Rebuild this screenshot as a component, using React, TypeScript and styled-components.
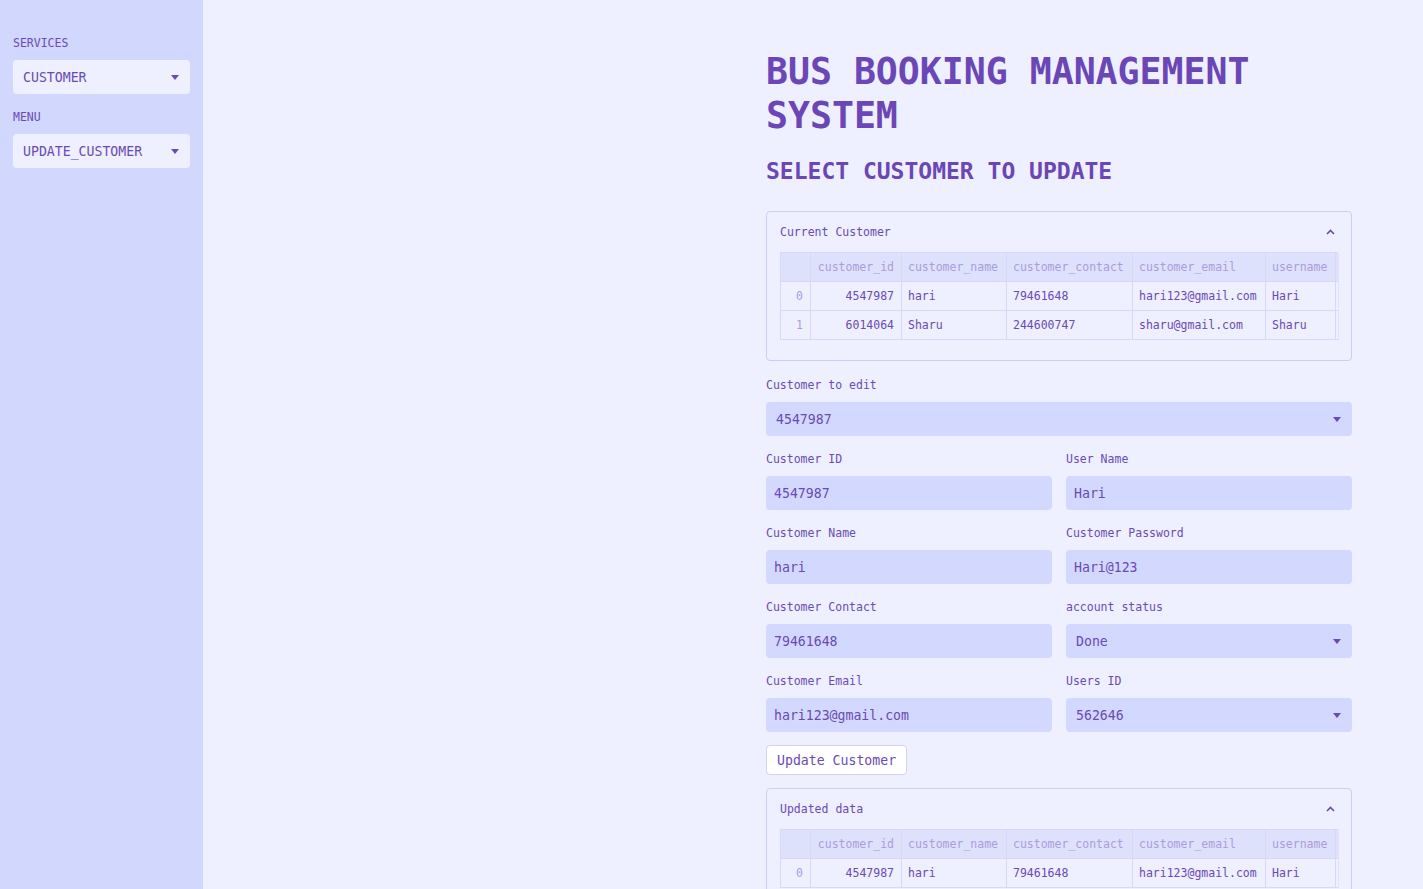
import { Fragment } from 'react';
import styled, { createGlobalStyle } from 'styled-components';

const GlobalStyle = createGlobalStyle`
    html, body {
        margin: 0;
        padding: 0;
        background: #EEF0FF;
        font-family: "DejaVu Sans Mono", "Liberation Mono", monospace;
        color: #6A4AB4;
    }
`;

const Page = styled.div`
    display: flex;
    width: 100%;
    height: 889px;
    overflow: hidden;
`;

const Sidebar = styled.aside`
    width: 203px;
    flex-shrink: 0;
    background: #D2D7FE;
    padding: 36px 13px 0 13px;
    box-sizing: border-box;
`;

const SideLabel = styled.div`
    font-size: 11.5px;
    height: 14px;
    line-height: 14px;
    margin-bottom: 10px;
    color: #6B4BB5;
`;

const SideSelect = styled.div`
    display: flex;
    align-items: center;
    justify-content: space-between;
    height: 34px;
    padding: 0 11px 0 10px;
    background: #EEF0FF;
    border-radius: 4px;
    font-size: 13.2px;
    color: #6A4AB4;
    margin-bottom: 16px;
`;

const Main = styled.main`
    flex: 1;
    display: flex;
    justify-content: flex-end;
    padding: 0 71px 0 0;
`;

const Content = styled.div`
    width: 586px;
    padding-top: 50px;
`;

const Title = styled.h1`
    margin: 0;
    font-size: 36.5px;
    line-height: 44px;
    font-weight: 700;
    color: #6B46B6;
`;

const SubTitle = styled.h2`
    margin: 18px 0 0 0;
    font-size: 23px;
    line-height: 30px;
    font-weight: 600;
    color: #6B46B6;
`;

const Expander = styled.section<{ $top: number }>`
    margin-top: ${p => p.$top}px;
    border: 1px solid #CFCDF3;
    border-radius: 4px;
    padding: 0 13px 20px 13px;
`;

const ExpanderHead = styled.div`
    display: flex;
    align-items: center;
    justify-content: space-between;
    height: 40px;
    font-size: 11.5px;
    color: #6A4AB4;
    padding-right: 3px;
`;

const Table = styled.div`
    display: grid;
    grid-template-columns: 30px 91px 105px 126px 133px 70px 3px;
    border-top: 1px solid #D6D8F6;
    border-left: 1px solid #D6D8F6;
    font-size: 11.5px;
`;

const Cell = styled.div<{ $head?: boolean; $right?: boolean; $index?: boolean }>`
    height: 29px;
    display: flex;
    align-items: center;
    justify-content: ${p => (p.$right ? 'flex-end' : 'flex-start')};
    padding: 0 7px 0 6px;
    box-sizing: border-box;
    background: ${p => (p.$head ? '#DDE1FC' : 'transparent')};
    color: ${p => (p.$head || p.$index ? '#A99DDB' : '#6A4AB4')};
    border-right: 1px solid #D6D8F6;
    border-bottom: 1px solid #D6D8F6;
    white-space: nowrap;
    overflow: hidden;
`;

const Edge = styled.div<{ $head?: boolean }>`
    height: 29px;
    box-sizing: border-box;
    background: ${p => (p.$head ? '#DDE1FC' : 'transparent')};
    border-right: 1px solid #E2E3F8;
    border-bottom: 1px solid #D6D8F6;
`;

const FieldLabel = styled.div`
    font-size: 11.5px;
    height: 14px;
    line-height: 14px;
    margin-bottom: 10px;
    color: #6B4BB5;
`;

const Field = styled.div`
    display: flex;
    flex-direction: column;
`;

const FullField = styled(Field)`
    margin-top: 17px;
`;

const Grid = styled.div`
    display: grid;
    grid-template-columns: 1fr 1fr;
    column-gap: 14px;
    row-gap: 16px;
    margin-top: 16px;
`;

const InputBox = styled.div<{ $select?: boolean }>`
    display: flex;
    align-items: center;
    justify-content: space-between;
    height: 34px;
    padding: 0 11px 0 ${p => (p.$select ? 10 : 8)}px;
    background: #D3D9FE;
    border-radius: 4px;
    font-size: 13.2px;
    color: #6A4AB4;
`;

const Button = styled.button`
    margin-top: 13px;
    height: 30px;
    padding: 0 10px;
    background: #FFFFFF;
    border: 1px solid #D5D3F2;
    border-radius: 4px;
    font-family: inherit;
    font-size: 13.2px;
    color: #6A4AB4;
`;

function Caret() {
    return (
        <svg width="8" height="5" viewBox="0 0 8 5">
            <path d="M0 0 L8 0 L4 5 Z" fill="#6A4AB4" />
        </svg>
    );
}

function ChevronUp() {
    return (
        <svg width="9" height="6" viewBox="0 0 9 6">
            <path d="M1 5 L4.5 1.5 L8 5" fill="none" stroke="#6A4AB4" strokeWidth="1.6" />
        </svg>
    );
}

const columns = ['customer_id', 'customer_name', 'customer_contact', 'customer_email', 'username'];

type Row = [string, string, string, string, string];

const customerRows: Row[] = [
    ['4547987', 'hari', '79461648', 'hari123@gmail.com', 'Hari'],
    ['6014064', 'Sharu', '244600747', 'sharu@gmail.com', 'Sharu'],
];

function DataTable({ rows }: { rows: Row[] }) {
    return (
        <Table>
            <Cell $head />
            {columns.map(c => (
                <Cell key={c} $head $right={c === 'customer_id'}>{c}</Cell>
            ))}
            <Edge $head />
            {rows.map((r, i) => (
                <Fragment key={i}>
                    <Cell $index $right>{i}</Cell>
                    {r.map((v, j) => (
                        <Cell key={j} $right={j === 0}>{v}</Cell>
                    ))}
                    <Edge />
                </Fragment>
            ))}
        </Table>
    );
}

export default function App() {
    return (
        <Page>
            <GlobalStyle />
            <Sidebar>
                <SideLabel>SERVICES</SideLabel>
                <SideSelect>CUSTOMER<Caret /></SideSelect>
                <SideLabel>MENU</SideLabel>
                <SideSelect>UPDATE_CUSTOMER<Caret /></SideSelect>
            </Sidebar>
            <Main>
                <Content>
                    <Title>BUS BOOKING MANAGEMENT SYSTEM</Title>
                    <SubTitle>SELECT CUSTOMER TO UPDATE</SubTitle>

                    <Expander $top={25}>
                        <ExpanderHead>Current Customer<ChevronUp /></ExpanderHead>
                        <DataTable rows={customerRows} />
                    </Expander>

                    <FullField>
                        <FieldLabel>Customer to edit</FieldLabel>
                        <InputBox $select>4547987<Caret /></InputBox>
                    </FullField>

                    <Grid>
                        <Field>
                            <FieldLabel>Customer ID</FieldLabel>
                            <InputBox>4547987</InputBox>
                        </Field>
                        <Field>
                            <FieldLabel>User Name</FieldLabel>
                            <InputBox>Hari</InputBox>
                        </Field>
                        <Field>
                            <FieldLabel>Customer Name</FieldLabel>
                            <InputBox>hari</InputBox>
                        </Field>
                        <Field>
                            <FieldLabel>Customer Password</FieldLabel>
                            <InputBox>Hari@123</InputBox>
                        </Field>
                        <Field>
                            <FieldLabel>Customer Contact</FieldLabel>
                            <InputBox>79461648</InputBox>
                        </Field>
                        <Field>
                            <FieldLabel>account status</FieldLabel>
                            <InputBox $select>Done<Caret /></InputBox>
                        </Field>
                        <Field>
                            <FieldLabel>Customer Email</FieldLabel>
                            <InputBox>hari123@gmail.com</InputBox>
                        </Field>
                        <Field>
                            <FieldLabel>Users ID</FieldLabel>
                            <InputBox $select>562646<Caret /></InputBox>
                        </Field>
                    </Grid>

                    <Button>Update Customer</Button>

                    <Expander $top={13}>
                        <ExpanderHead>Updated data<ChevronUp /></ExpanderHead>
                        <DataTable rows={customerRows.slice(0, 1)} />
                    </Expander>
                </Content>
            </Main>
        </Page>
    );
}
